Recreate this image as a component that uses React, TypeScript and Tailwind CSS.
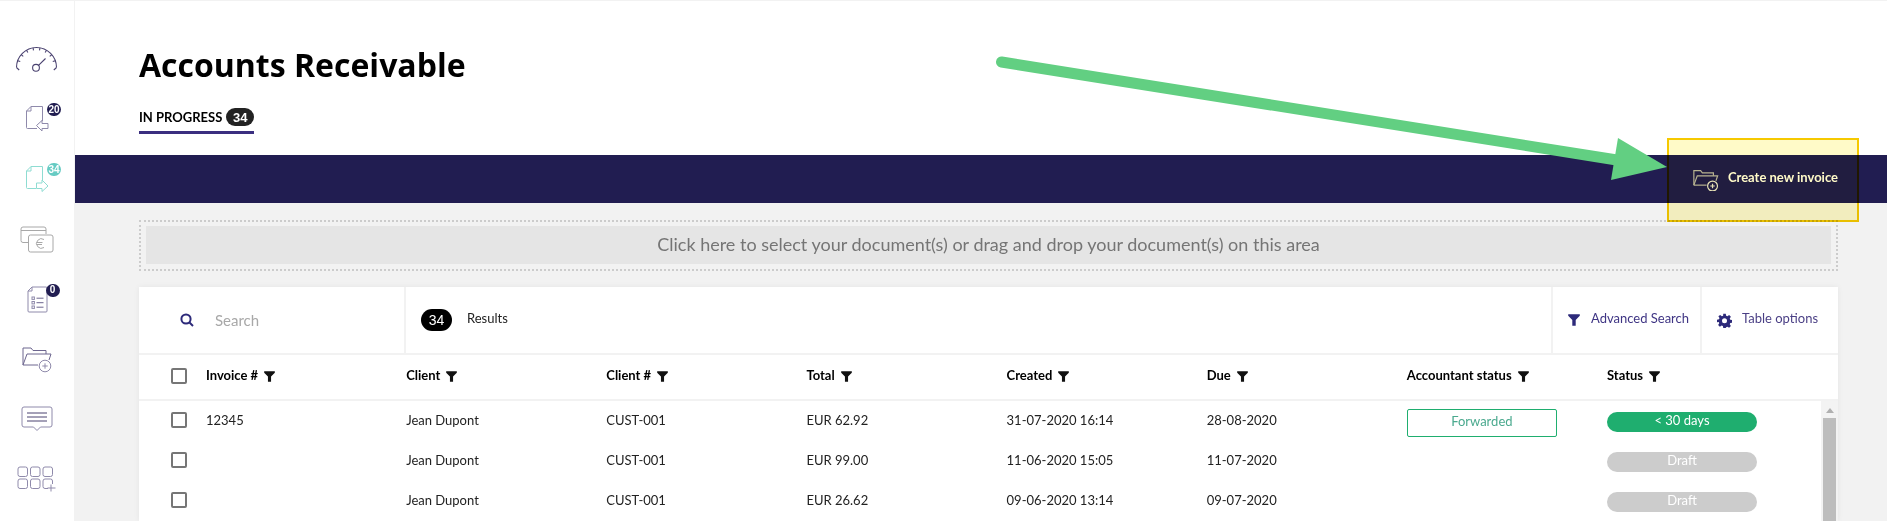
import React from "react";

const ink = "#4a4270";
const soft = "#8f8aab";

function Badge({ children, color }: { children: React.ReactNode; color: string }) {
  return (
    <span
      className="absolute flex items-center justify-center h-[13px] min-w-[14px] px-[1px] rounded-full text-white text-[10px] font-bold leading-none top-[-2px] right-[-12px] font-['Liberation_Sans',sans-serif]"
      style={{ backgroundColor: color }}
    >
      {children}
    </span>
  );
}

function Gauge() {
  const ticks = [-90, -70, -50, -30, -10, 10, 30, 50, 70, 90];
  return (
    <svg width="44" height="28" viewBox="0 0 44 28" fill="none" stroke={ink} strokeWidth="1.1">
      <path d="M1.5 22.5 A20 20 0 0 1 41.500 22.500" />
      {ticks.map((a) => {
        const r = (a * Math.PI) / 180;
        return (
          <line
            key={a}
            x1={21.5 + 20 * Math.sin(r)}
            y1={22.5 - 20 * Math.cos(r)}
            x2={21.5 + 17.3 * Math.sin(r)}
            y2={22.5 - 17.3 * Math.cos(r) + (Math.abs(a) === 90 ? 2.5 : 0)}
          />
        );
      })}
      <circle cx="21" cy="22.8" r="3.4" />
      <line x1="23.5" y1="20.300" x2="30.500" y2="13.500" />
    </svg>
  );
}

function DocIn({ stroke }: { stroke: string }) {
  return (
    <svg width="24" height="28" viewBox="0 0 24 28" fill="none" stroke={stroke} strokeWidth="1">
      <path d="M6 1.5 H17.5 V16 M1.500 6 L6 1.5 V6 H1.500 V22.5 Q1.500 23.500 2.500 23.500 H12" />
      <path d="M23 18.5 H17 V15.5 L11.500 20.500 L17 26 V23.500 H23 Z" />
    </svg>
  );
}

function DocOut({ stroke }: { stroke: string }) {
  return (
    <svg width="24" height="28" viewBox="0 0 24 28" fill="none" stroke={stroke} strokeWidth="1">
      <path d="M6 1.5 H17.5 V15 M1.500 6 L6 1.5 V6 H1.500 V22.500 Q1.500 23.500 2.500 23.500 H11" />
      <path d="M11.500 18 H17 V15 L23 21 L17 26.500 V23.500 H11.500 Z" />
    </svg>
  );
}

function Euro() {
  return (
    <svg width="34" height="27" viewBox="0 0 34 27" fill="none" stroke="#a8a8a8" strokeWidth="1">
      <path d="M8 16.500 H3 Q1 16.500 1 14.500 V3 Q1 1 3 1 H24 Q26 1 26 3 V8" />
      <line x1="1" y1="4.500" x2="26" y2="4.500" />
      <rect x="8.500" y="9" width="24.500" height="17" rx="2" />
      <path d="M24 13.500 A4.800 4.800 0 1 0 24 21.500 M16.500 16.500 H22.500 M16.500 18.500 H22" />
    </svg>
  );
}

function Checklist() {
  return (
    <svg width="21" height="27" viewBox="0 0 21 27" fill="none" stroke={soft} strokeWidth="1">
      <path d="M5 1 H19 Q20 1 20 2 V25 Q20 26 19 26 H2 Q1 26 1 25 V5 L5 1 V5 H1" />
      <g stroke="#6d668f">
        <rect x="5" y="11" width="2.400" height="2.400" stroke={soft} />
        <rect x="5" y="15.500" width="2.400" height="2.400" stroke={soft} />
        <rect x="5" y="20" width="2.400" height="2.400" stroke={soft} />
        <line x1="9.500" y1="12.200" x2="16.500" y2="12.200" />
        <line x1="9.500" y1="16.700" x2="16.500" y2="16.700" />
        <line x1="9.500" y1="21.200" x2="16.500" y2="21.200" />
      </g>
    </svg>
  );
}

function Folder({ stroke, accent, size = 1, sw = 1 }: { stroke: string; accent: string; size?: number; sw?: number }) {
  return (
    <svg width={30 * size} height={27 * size} viewBox="0 0 30 27" fill="none" stroke={stroke} strokeWidth={sw}>
      <path d="M1 19 V2 H9 L11 4.500 H24 V8" />
      <path d="M1 19 L5 8 H29 L27 14" />
      <path d="M1 19 H16" />
      <circle cx="23" cy="20" r="5.800" stroke={accent} />
      <path d="M23 17.300 V22.700 M20.300 20 H25.700" stroke={accent} />
    </svg>
  );
}

function Chat() {
  return (
    <svg width="32" height="26" viewBox="0 0 32 26" fill="none" stroke={soft} strokeWidth="1">
      <path d="M3 1 H29 Q31 1 31 3 V19 Q31 21 29 21 H19.500 L16 24.500 L12.500 21 H3 Q1 21 1 19 V3 Q1 1 3 1 Z" />
      <g stroke={ink}>
        <line x1="6" y1="7" x2="26" y2="7" />
        <line x1="6" y1="11" x2="26" y2="11" />
        <line x1="6" y1="15" x2="26" y2="15" />
      </g>
    </svg>
  );
}

function AppsGrid() {
  const cells = [
    [1, 1],
    [13.5, 1],
    [26, 1],
    [1, 13],
    [13.5, 13],
  ];
  return (
    <svg width="40" height="26" viewBox="0 0 40 26" fill="none" stroke={soft} strokeWidth="1">
      {cells.map(([x, y]) => (
        <rect key={`${x}-${y}`} x={x} y={y} width="9.500" height="9.500" rx="2" />
      ))}
      <path d="M31 22.500 H28 Q26 22.500 26 20.500 V15 Q26 13 28 13 H33.500 Q35.500 13 35.500 15 V18" />
      <path d="M34 18.500 V25.500 M30.500 22 H38.500" />
    </svg>
  );
}

function FunnelIcon({ color, size = 11 }: { color: string; size?: number }) {
  return (
    <svg width={size} height={size} viewBox="0 0 12 12" fill={color} className="shrink-0">
      <path d="M0.200 0.300 H11.800 V1.800 L7.700 6 V11.700 H4.300 V6 L0.200 1.800 Z" />
    </svg>
  );
}

const columns = ["Client", "Client #", "Total", "Created", "Due", "Accountant status", "Status"];

const rows = [
  { inv: "12345", total: "EUR 62.92", created: "31-07-2020 16:14", due: "28-08-2020", acc: true, status: "< 30 days", color: "bg-[#1fae6f]" },
  { inv: "", total: "EUR 99.00", created: "11-06-2020 15:05", due: "11-07-2020", acc: false, status: "Draft", color: "bg-[#cccccc]" },
  { inv: "", total: "EUR 26.62", created: "09-06-2020 13:14", due: "09-07-2020", acc: false, status: "Draft", color: "bg-[#cccccc]" },
];

function Checkbox({ className }: { className?: string }) {
  return <span className={`block w-4 h-4 shrink-0 border-2 border-[#767676] rounded-[2px] bg-white ${className ?? ""}`} />;
}

function Cell({ children }: { children?: React.ReactNode }) {
  return <div className="w-[200.15px] shrink-0 flex items-center">{children}</div>;
}

export default function App() {
  return (
    <div className="relative flex flex-col w-[1887px] h-[521px] overflow-hidden bg-[#f2f2f2] font-['Lato',sans-serif] text-[13px] text-[#222]">
      <div className="h-px bg-[#f2f2f2] shrink-0" />
      <div className="flex flex-1 min-h-0">
        <aside className="w-[74px] shrink-0 bg-white flex flex-col pt-[28px] mr-px">
          {[
            <Gauge />,
            <span className="relative block"><DocIn stroke={soft} /><Badge color="#211d51">20</Badge></span>,
            <span className="relative block"><DocOut stroke="#8edcd2" /><Badge color="#66cbc3">34</Badge></span>,
            <Euro />,
            <span className="relative block"><Checklist /><Badge color="#211d51">0</Badge></span>,
            <Folder stroke="#6d668f" accent={soft} />,
            <Chat />,
            <AppsGrid />,
          ].map((icon, i) => (
            <div key={i} className="h-[60px] shrink-0 flex items-center justify-center [&_svg]:block">
              {icon}
            </div>
          ))}
        </aside>

        <main className="flex-1 min-w-0 flex flex-col">
          <header className="h-[154px] shrink-0 bg-white pl-[64px] pt-[41px]">
            <h1 className="font-['Open_Sans',sans-serif] font-bold text-[32px] leading-[46px] text-black">
              Accounts Receivable
            </h1>
            <div className="mt-[20px] inline-flex items-center gap-[4px] h-[26px] border-b-[3px] border-[#3b2f80] pb-[5px] text-[13px] font-bold text-black leading-none">
              <span>IN PROGRESS</span>
              <span className="flex items-center justify-center w-[28px] h-[18px] rounded-full bg-[#222222] text-white text-[13px] font-bold font-['Liberation_Sans',sans-serif]">
                34
              </span>
            </div>
          </header>

          <div className="h-[48px] shrink-0 bg-[#211d51] flex items-center justify-end pr-[49px]">
            <div className="flex items-center gap-[9px] text-[13px] font-bold text-white mt-[-2px]">
              <span className="block mt-[4px]"><Folder stroke="#b8b8b8" accent="#e8e8e8" size={0.85} sw={1.400} /></span>
              <span>Create new invoice</span>
            </div>
          </div>

          <div className="mt-[17px] ml-[64px] mr-[49px] h-[51px] shrink-0 border-2 border-dotted border-[#cccccc] pt-[4px] pb-[5px] px-[5px]">
            <div className="h-full bg-[#e5e5e5] flex items-center justify-center pb-[2px] text-[18px] text-[#757575]">
              Click here to select your document(s) or drag and drop your document(s) on this area
            </div>
          </div>

          <section className="mt-[16px] ml-[64px] mr-[49px] bg-white shadow-[0_0_6px_rgba(0,0,0,0.06)] flex-1 min-h-0 flex flex-col overflow-hidden">
            <div className="h-[68px] shrink-0 flex border-b-2 border-[#f2f2f2]">
              <div className="w-[267px] shrink-0 border-r-2 border-[#f2f2f2] flex items-center pl-[41px]">
                <svg width="14" height="14" viewBox="0 0 14 14" fill="none" stroke="#2d2a7a" strokeWidth="2" className="mt-[-1px]">
                  <circle cx="6" cy="6" r="4.600" />
                  <line x1="9.500" y1="9.500" x2="13" y2="13" />
                </svg>
                <span className="ml-[21px] text-[15px] text-[#a8a8a8]">Search</span>
              </div>
              <div className="flex-1 flex items-center pl-[15px]">
                <span className="flex items-center justify-center w-[31px] h-[22px] rounded-full bg-black text-white text-[14px] font-['Liberation_Sans',sans-serif]">
                  34
                </span>
                <span className="ml-[15px] mt-[-2px] text-[#222]">Results</span>
              </div>
              <div className="w-[149px] shrink-0 border-l-2 border-[#f2f2f2] flex items-center pl-[15px] text-[#3f3584]">
                <span className="mt-[-1px]"><FunnelIcon color="#2d2a7a" size={12} /></span>
                <span className="ml-[11px] mt-[-2px]">Advanced Search</span>
              </div>
              <div className="w-[138px] shrink-0 border-l-2 border-[#f2f2f2] flex items-center pl-[15px] text-[#4a3f85]">
                <svg width="15" height="15" viewBox="0 0 24 24" fill="#2d2a7a" fillRule="evenodd" className="shrink-0">
                  <path d="M10 1h4l.6 3.200 2 .8L19.400 3.200l2.800 2.800-1.800 2.800.8 2 3.200.6v4l-3.200.6-.8 2 1.800 2.800-2.800 2.800-2.800-1.800-2 .8L14 24h-4l-.6-3.200-2-.8-2.800 1.800-2.800-2.800 1.800-2.800-.8-2L0 14.600v-4l3.200-.6.8-2L2.200 5.200 5 3.200l2.800 1.800 2-.8zM12 8.500a4 4 0 1 0 0 8 4 4 0 0 0 0-8z" />
                </svg>
                <span className="ml-[10px] mt-[-2px]">Table options</span>
              </div>
            </div>

            <div className="h-[46px] shrink-0 flex items-center border-b-2 border-[#f2f2f2] pl-[32px] pb-[2px] font-bold text-black">
              <Checkbox className="mt-[-1px]" />
              <div className="w-[19px] shrink-0" />
              <Cell>
                <span>Invoice #</span>
                <span className="ml-[6px]"><FunnelIcon color="#111" /></span>
              </Cell>
              {columns.map((c) => (
                <Cell key={c}>
                  <span>{c}</span>
                  <span className="ml-[6px]"><FunnelIcon color="#111" /></span>
                </Cell>
              ))}
            </div>

            <div className="relative flex-1 min-h-0">
              {rows.map((r, i) => (
                <div key={i} className="h-[40px] flex items-center pl-[32px]">
                  <Checkbox className="mt-[-2px]" />
                  <div className="w-[19px] shrink-0" />
                  <Cell>{r.inv}</Cell>
                  <Cell>Jean Dupont</Cell>
                  <Cell>CUST-001</Cell>
                  <Cell>{r.total}</Cell>
                  <Cell>{r.created}</Cell>
                  <Cell>{r.due}</Cell>
                  <Cell>
                    {r.acc && (
                      <span className="w-[150px] h-[28px] mt-[4px] pb-[2px] flex items-center justify-center rounded-[2px] border border-[#1fae6f] text-[#4aa98e]">
                        Forwarded
                      </span>
                    )}
                  </Cell>
                  <Cell>
                    <span className={`w-[150px] h-[20px] mt-[2px] pb-[2px] flex items-center justify-center rounded-full text-white ${r.color}`}>
                      {r.status}
                    </span>
                  </Cell>
                </div>
              ))}
              <div className="absolute right-0 top-0 bottom-0 w-[17px] bg-[#f3f3f3]">
                <div className="mx-auto mt-[7px] w-0 h-0 border-x-[4px] border-x-transparent border-b-[5px] border-b-[#b0b0b0]" />
                <div className="mt-[5px] mx-[2px] h-[120px] bg-[#bdbdbd]" />
              </div>
            </div>
          </section>
        </main>
      </div>

      <div className="absolute left-[1667px] top-[138px] w-[192px] h-[84px] bg-[#fffac8] border-2 border-[#f6c900] mix-blend-multiply" />

      <svg className="absolute left-0 top-0 pointer-events-none" width="1887" height="521" viewBox="0 0 1887 521">
        <line x1="1001.500" y1="62" x2="1620" y2="160.500" stroke="#62cf82" strokeWidth="11" strokeLinecap="round" />
        <polygon points="1618,138 1667,167 1611,180" fill="#62cf82" />
      </svg>
    </div>
  );
}
